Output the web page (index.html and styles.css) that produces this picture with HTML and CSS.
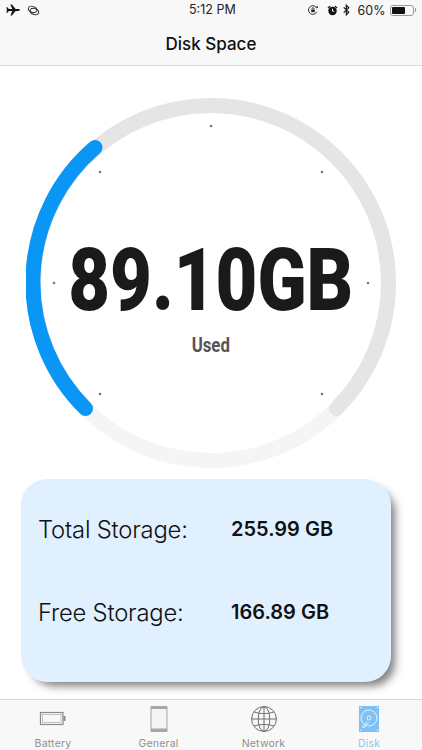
FILE: index.html
```html
<!DOCTYPE html>
<html lang="en">
<head>
<meta charset="utf-8">
<title>Disk Space</title>
<link rel="stylesheet" href="styles.css">
</head>
<body>
<div class="app">
  <header class="top">
    <div class="status">
      <div class="status-left">
        <svg class="ic-plane" viewBox="0 0 14 12"><path d="M0.3 3.2h1l1.6 1.900h3.400L4.400 0.400h1.500L9.600 5.100h2.600c1 0 1.700.4 1.700.9s-.7.9-1.700.9H9.600L5.900 11.600H4.400L6.300 6.900H2.900L1.300 8.800h-1L1 6z" fill="#111"/></svg>
        <svg class="ic-link" viewBox="0 0 14 12" fill="none" stroke="#222" stroke-width="1"><ellipse cx="6" cy="4.800" rx="4.800" ry="3.200" transform="rotate(20 6 4.800)"/><ellipse cx="8" cy="7.200" rx="4.800" ry="3.200" transform="rotate(20 8 7.200)"/></svg>
      </div>
      <span class="clock">5:12 PM</span>
      <div class="status-right">
        <svg class="ic-rot" viewBox="0 0 12 12" fill="none"><path d="M10.600 8A5.200 5.200 0 1 1 10.600 4" stroke="#222" stroke-width="1.100"/><path d="M9 3.600h2.800V1z" fill="#222"/><rect x="3.900" y="5.400" width="4.200" height="3.200" fill="#222"/><path d="M4.800 5.400V4.400a1.200 1.200 0 0 1 2.400 0v1" stroke="#222"/></svg>
        <svg class="ic-alarm" viewBox="0 0 12 12"><circle cx="6" cy="6.600" r="4.600" fill="#111"/><path d="M0.600 2.800 3 .8l1 .9-2.500 2.200zM11.400 2.800 9 .8l-1 .9 2.500 2.200z" fill="#111"/><path d="M6 4v2.800h2" stroke="#fff" fill="none"/></svg>
        <svg class="ic-bt" viewBox="0 0 8 13" fill="none" stroke="#111" stroke-width="1.300"><path d="M.8 3.400 6.600 9 3.800 12V1l2.800 3L.8 9.600"/></svg>
        <span class="pct">60%</span>
        <div class="batt"><div class="batt-fill"></div></div>
        <div class="batt-tip"></div>
      </div>
    </div>
    <h1 class="title">Disk Space</h1>
  </header>

  <main class="main">
    <div class="gauge">
      <svg class="gauge-svg" viewBox="0 0 370 370">
        <circle class="track-full" cx="185" cy="185" r="177.500"/>
        <path class="track-grey" d="M59.500 310.500A177.500 177.500 0 1 1 310.500 310.500"/>
        <path class="track-blue" d="M59.500 310.500A177.500 177.500 0 0 1 69 49.500"/>
        <g class="ticks">
          <circle cx="185" cy="28" r="1.300"/>
          <circle cx="74" cy="74" r="1.300"/>
          <circle cx="296" cy="74" r="1.300"/>
          <circle cx="28" cy="185" r="1.300"/>
          <circle cx="342" cy="185" r="1.300"/>
          <circle cx="74" cy="296" r="1.300"/>
          <circle cx="296" cy="296" r="1.300"/>
        </g>
      </svg>
      <div class="readout">
        <div class="amount">89.10GB</div>
        <div class="used">Used</div>
      </div>
    </div>

    <section class="card">
      <div class="row"><span class="label">Total Storage:</span><span class="value">255.99 GB</span></div>
      <div class="row"><span class="label">Free Storage:</span><span class="value">166.89 GB</span></div>
    </section>
  </main>

  <nav class="tabs">
    <div class="tab">
      <svg class="tab-ic" viewBox="0 0 30 26" fill="none"><rect x="2.500" y="6.500" width="22.500" height="12" stroke="#8a8a8a" stroke-width="1.200"/><rect x="4.500" y="8.500" width="18.500" height="8" stroke="#b5b5b5" stroke-width=".8"/><rect x="25.500" y="10" width="2" height="5" fill="#8a8a8a"/></svg>
      <span>Battery</span>
    </div>
    <div class="tab">
      <svg class="tab-ic" viewBox="0 0 30 26"><rect x="6.500" y="0" width="17" height="26" rx="1" fill="#a6a6a6"/><rect x="7.500" y="3" width="15" height="19.500" fill="#f4f4f4"/></svg>
      <span>General</span>
    </div>
    <div class="tab">
      <svg class="tab-ic" viewBox="0 0 30 26" fill="none" stroke="#6f6f6f" stroke-width="1"><circle cx="15" cy="13" r="12.400"/><ellipse cx="15" cy="13" rx="5.800" ry="12.400"/><path d="M15 .6v24.800M2.600 13h24.800M4.800 5.800c6 2.400 14.400 2.400 20.400 0M4.800 20.200c6-2.400 14.400-2.400 20.400 0"/></svg>
      <span>Network</span>
    </div>
    <div class="tab tab-active">
      <svg class="tab-ic" viewBox="0 0 30 26"><rect x="5" y="0" width="20" height="26" fill="#7fc1f4"/><g fill="none" stroke="#eaf5fe" stroke-width=".9"><circle cx="15" cy="12" r="8"/><circle cx="15" cy="12" r="2"/><path d="M13 15.500 8.500 21l1.500 1L14.500 16.500"/></g><g fill="#eaf5fe"><circle cx="6.800" cy="1.800" r=".7"/><circle cx="23.200" cy="1.800" r=".7"/><circle cx="6.800" cy="24.200" r=".7"/><circle cx="23.200" cy="24.200" r=".7"/></g></svg>
      <span>Disk</span>
    </div>
  </nav>
</div>
</body>
</html>
```
FILE: styles.css
```css
* { box-sizing: border-box; }
html, body { margin: 0; padding: 0; }
body { font-family: Inter, "Noto Sans", "Liberation Sans", sans-serif; background: #fff; color: #111; }
.app { width: 422px; height: 750px; display: flex; flex-direction: column; overflow: hidden; }

.top { height: 66px; background: #f8f8f8; border-bottom: 1px solid #d9d9d9; flex: none; }
.status { height: 20px; padding: 0 6px; display: flex; align-items: center; justify-content: space-between; position: relative; font-size: 12.500px; color: #222; }
.status-left, .status-right { display: flex; align-items: center; }
.ic-plane { width: 14px; height: 12px; }
.ic-link { width: 13px; height: 11px; margin-left: 7px; }
.clock { position: absolute; left: 189px; top: 2px; font-weight: 400; font-size: 12.500px; }
.ic-rot { width: 10px; height: 10px; }
.ic-alarm { width: 11px; height: 11px; margin-left: 9px; }
.ic-bt { width: 7px; height: 12px; margin-left: 5px; }
.pct { margin-left: 8px; font-size: 12.500px; }
.batt { width: 24px; height: 11px; border: 1px solid #999; border-radius: 3px; padding: 1px; margin-left: 4px; }
.batt-fill { width: 13px; height: 100%; background: #111; border-radius: 1px; }
.batt-tip { width: 1.500px; height: 4px; background: #999; margin-left: 1px; }
.title { margin: 0; padding-top: 11px; text-align: center; font-size: 17px; line-height: 26px; font-weight: 500; color: #111; }

.main { flex: 1; display: flex; flex-direction: column; padding-top: 32px; background: #fff; }
.gauge { width: 370px; height: 370px; margin-left: 26px; position: relative; }
.gauge-svg { display: block; width: 370px; height: 370px; }
.track-full { fill: none; stroke: #f5f5f5; stroke-width: 15; }
.track-grey { fill: none; stroke: #e5e5e5; stroke-width: 15; stroke-linecap: round; }
.track-blue { fill: none; stroke: #0a96f5; stroke-width: 15; stroke-linecap: round; }
.ticks circle { fill: #777; }
.readout { position: absolute; inset: 0; display: flex; flex-direction: column; align-items: center; padding-top: 132px; }
.amount { font-family: Roboto, "Liberation Sans", sans-serif; font-weight: 900; font-size: 88px; line-height: 100px; color: #1a1a1a; transform: scaleX(.82); white-space: nowrap; }
.used { font-family: Roboto, "Liberation Sans", sans-serif; font-weight: 700; font-size: 20px; line-height: 24px; color: #555; margin-top: 3px; transform: scaleX(.84); }

.card { width: 370px; height: 203px; margin: 11px 0 0 21px; background: #e0f0fe; border-radius: 26px; box-shadow: 7px 7px 9px -3px rgba(0,0,0,.5); padding: 27px 17px 0; display: flex; flex-direction: column; gap: 37px; }
.row { display: flex; align-items: center; height: 46px; }
.label { width: 193px; font-size: 23.800px; font-weight: 350; color: #111; letter-spacing: -.2px; }
.value { font-size: 20px; font-weight: 600; color: #111; }

.tabs { height: 51px; flex: none; background: #f8f8f8; border-top: 1px solid #d9d9d9; display: grid; grid-template-columns: 106px 105px 105px 106px; }
.tab { display: flex; flex-direction: column; align-items: center; padding-top: 6px; font-size: 10.500px; color: #8f8f8f; letter-spacing: .2px; }
.tab-ic { width: 30px; height: 26px; display: block; }
.tab span { line-height: 13px; margin-top: 5px; }
.tab-active { color: #8cc6f2; }
```
